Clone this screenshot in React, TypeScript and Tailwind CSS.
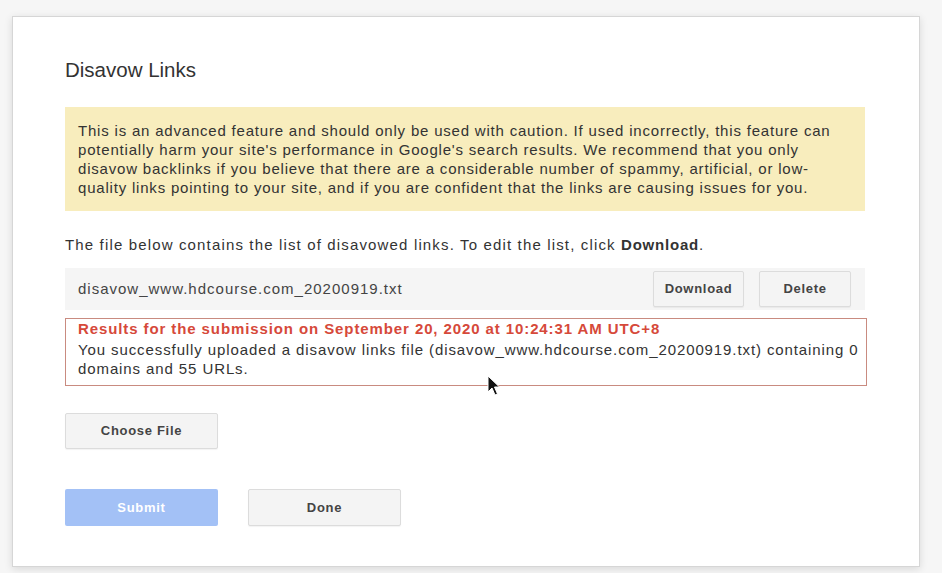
// Disavow Links dialog

const font = { fontFamily: '"Liberation Sans", Arial, sans-serif' };

function GrayButton({ label, className = "" }: { label: string; className?: string }) {
    return (
        <button
            className={`h-[36px] rounded-[2px] border border-[#dcdcdc] bg-[#f4f4f4] text-[13px] font-bold tracking-[0.7px] text-[#444] shadow-[0_1px_1px_rgba(0,0,0,0.05)] ${className}`}
        >
            {label}
        </button>
    );
}

function Cursor() {
    return (
        <svg className="absolute left-[487px] top-[375px]" width="14" height="22" viewBox="0 0 14 22">
            <path d="M1 1 L1 17 L5 13 L8 20 L10.5 19 L7.5 12 L12.5 12 Z" fill="#111" stroke="#fff" strokeWidth="1" strokeLinejoin="round" />
        </svg>
    );
}

export default function App() {
    return (
        <div className="relative h-[573px] w-[942px] overflow-hidden bg-[#f6f6f6] pl-[12px] pt-[16px]" style={font}>
            <div className="h-[551px] w-[908px] border border-[#d6d6d6] bg-white pl-[52px] pt-[41px] shadow-[0_2px_8px_rgba(0,0,0,0.12)]">
                <h1 className="text-[20.5px] leading-[24px] text-[#333]">Disavow Links</h1>

                <div className="mt-[25px] w-[800px] whitespace-nowrap bg-[#f8edbd] px-[13px] py-[14px] text-[15px] leading-[19px] tracking-[0.8px] text-[#333]">
                    This is an advanced feature and should only be used with caution. If used incorrectly, this feature can
                    <br />
                    potentially harm your site's performance in Google's search results. We recommend that you only
                    <br />
                    disavow backlinks if you believe that there are a considerable number of spammy, artificial, or low-
                    <br />
                    quality links pointing to your site, and if you are confident that the links are causing issues for you.
                </div>

                <p className="mt-[24px] text-[15px] leading-[19px] tracking-[1.15px] text-[#333]">
                    The file below contains the list of disavowed links. To edit the list, click <b className="tracking-[0.8px]">Download</b>.
                </p>

                <div className="mt-[14px] flex h-[42px] w-[800px] items-center bg-[#f5f5f5] pl-[13px] pr-[14px]">
                    <span className="flex-1 text-[15px] tracking-[1px] text-[#444]">disavow_www.hdcourse.com_20200919.txt</span>
                    <GrayButton label="Download" className="w-[91px]" />
                    <GrayButton label="Delete" className="ml-[15px] w-[92px]" />
                </div>

                <div className="mt-[8px] h-[68px] w-[802px] whitespace-nowrap border border-[#c98b80] pl-[12px] pr-[6px] text-[15px] leading-[19px]">
                    <div className="font-bold tracking-[0.9px] text-[#d6493a]">Results for the submission on September 20, 2020 at 10:24:31 AM UTC+8</div>
                    <div className="mt-[2px] tracking-[0.9px] text-[#333]">
                        You successfully uploaded a disavow links file (disavow_www.hdcourse.com_20200919.txt) containing 0
                        <br />
                        domains and 55 URLs.
                    </div>
                </div>

                <GrayButton label="Choose File" className="mt-[27px] block w-[153px]" />

                <div className="mt-[40px] flex gap-[30px]">
                    <button className="h-[37px] w-[153px] rounded-[2px] bg-[#a3c1f6] text-[13px] font-bold tracking-[0.7px] text-white">
                        Submit
                    </button>
                    <GrayButton label="Done" className="h-[37px] w-[153px]" />
                </div>
            </div>
            <Cursor />
        </div>
    );
}
